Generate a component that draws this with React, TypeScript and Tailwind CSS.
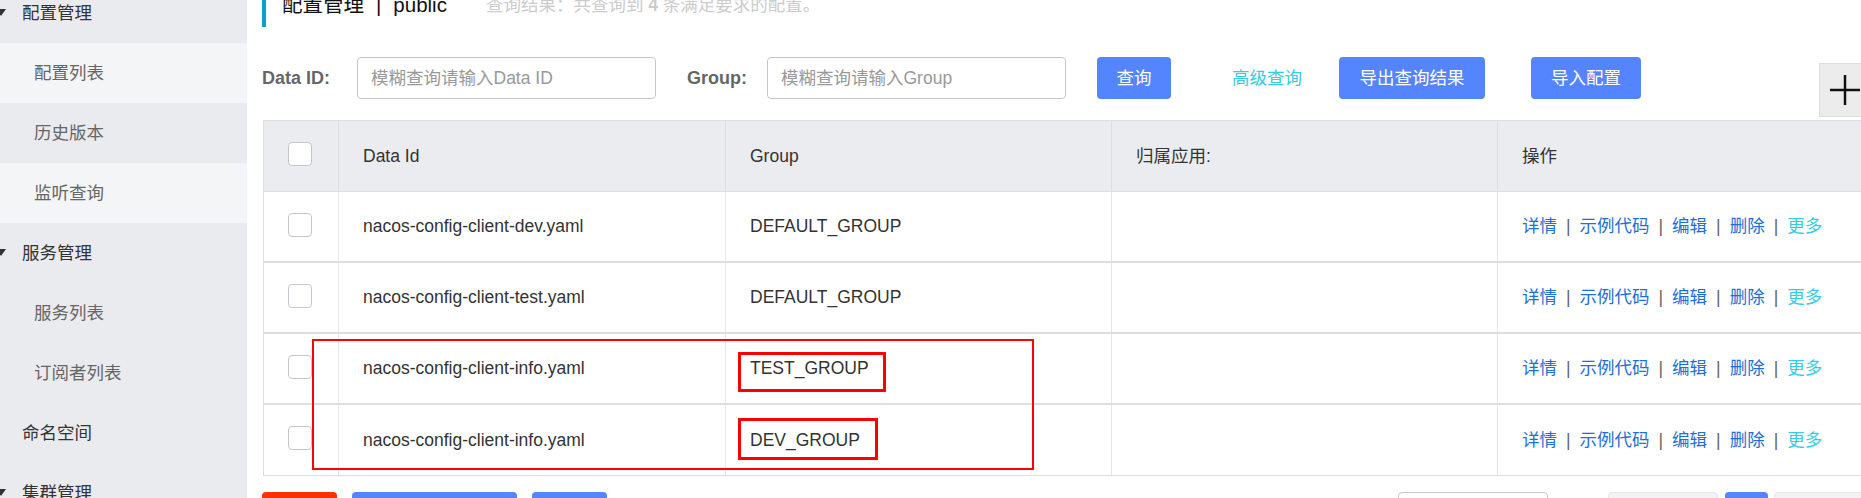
import React from "react";

const font = "font-['Liberation_Sans','Noto_Sans_CJK_SC',sans-serif]";

function Caret() {
  return (
    <svg width="10" height="8" viewBox="0 0 10 8" className="-ml-[4px] shrink-0">
      <polygon points="0,0 10,0 5,7" fill="#333" />
    </svg>
  );
}

function Checkbox() {
  return <div className="h-[24px] w-[24px] rounded-[4px] border border-[#c4c6cf] bg-white" />;
}

function Actions() {
  const sep = <span className="mx-[9px] text-[#666]">|</span>;
  return (
    <div className="flex items-center text-[#1e6fd9]">
      <span>详情</span>
      {sep}
      <span>示例代码</span>
      {sep}
      <span>编辑</span>
      {sep}
      <span>删除</span>
      {sep}
      <span className="text-[#33cde5]">更多</span>
    </div>
  );
}

export default function App() {
  const rows = [
    { id: "nacos-config-client-dev.yaml", group: "DEFAULT_GROUP" },
    { id: "nacos-config-client-test.yaml", group: "DEFAULT_GROUP" },
    { id: "nacos-config-client-info.yaml", group: "TEST_GROUP" },
    { id: "nacos-config-client-info.yaml", group: "DEV_GROUP" },
  ];

  return (
    <div className={`flex h-[498px] w-[1861px] overflow-hidden bg-white text-[17.5px] text-[#333] ${font}`}>
      {/* sidebar */}
      <aside className="w-[247px] shrink-0 bg-[#eaebef]">
        <div className="-mt-[17px]">
          <div className="flex h-[60px] items-center">
            <Caret />
            <span className="ml-[16px] text-[#333]">配置管理</span>
          </div>
          <div className="flex h-[60px] items-center bg-[#f4f5f7] pl-[34px] text-[#666]">配置列表</div>
          <div className="flex h-[60px] items-center pl-[34px] text-[#666]">历史版本</div>
          <div className="flex h-[60px] items-center bg-[#f4f5f7] pl-[34px] text-[#666]">监听查询</div>
          <div className="flex h-[60px] items-center">
            <Caret />
            <span className="ml-[16px] text-[#333]">服务管理</span>
          </div>
          <div className="flex h-[60px] items-center pl-[34px] text-[#666]">服务列表</div>
          <div className="flex h-[60px] items-center pl-[34px] text-[#666]">订阅者列表</div>
          <div className="flex h-[60px] items-center pl-[22px] text-[#333]">命名空间</div>
          <div className="flex h-[60px] items-center">
            <Caret />
            <span className="ml-[16px] text-[#333]">集群管理</span>
          </div>
        </div>
      </aside>

      {/* main */}
      <main className="relative flex-1 pl-[15px]">
        <div className="-mt-[16px] flex h-[43px] items-center border-l-4 border-[#0a9fd0] pl-[16px]">
          <span className="text-[20.5px] text-[#111]">配置管理</span>
          <span className="mx-[12px] text-[20.5px] text-[#111]">|</span>
          <span className="text-[20.5px] text-[#111]">public</span>
          <span className="ml-[39px] text-[#ccc]">
            查询结果：共查询到 <b>4</b> 条满足要求的配置。
          </span>
        </div>

        <div className="mt-[30px] flex h-[42px] items-center">
          <span className="w-[76px] text-[18px] font-bold text-[#666]">Data ID:</span>
          <div className="ml-[19px] flex h-[42px] w-[299px] items-center rounded-[4px] border border-[#c4c6cf] pl-[13px] text-[#999]">
            模糊查询请输入Data ID
          </div>
          <span className="ml-[31px] text-[18px] font-bold text-[#666]">Group:</span>
          <div className="ml-[20px] flex h-[42px] w-[299px] items-center rounded-[4px] border border-[#c4c6cf] pl-[13px] text-[#999]">
            模糊查询请输入Group
          </div>
          <button className="ml-[31px] h-[42px] w-[74px] rounded-[4px] bg-[#5584ff] text-white">查询</button>
          <span className="ml-[61px] text-[#33cde5]">高级查询</span>
          <button className="ml-[37px] h-[42px] w-[146px] rounded-[4px] bg-[#5584ff] text-white">导出查询结果</button>
          <button className="ml-[46px] h-[42px] w-[110px] rounded-[4px] bg-[#5584ff] text-white">导入配置</button>
        </div>

        <div className="absolute left-[1572px] top-[63px] flex h-[54px] w-[54px] items-center border border-[#dcdcdc] bg-[#ececec] pl-[10px]">
          <svg width="30" height="30" viewBox="0 0 30 30">
            <line x1="0" y1="15" x2="30" y2="15" stroke="#111" strokeWidth="2.5" />
            <line x1="15" y1="0" x2="15" y2="30" stroke="#111" strokeWidth="2.5" />
          </svg>
        </div>

        {/* table */}
        <div className="relative ml-[1px] mt-[21px] w-[1621px] border-l border-t border-[#dcdee3]">
          <div className="grid h-[71px] grid-cols-[75px_387px_386px_386px_387px] border-b border-[#dcdee3] bg-[#ebecf0]">
            <div className="flex items-center border-r border-[#dcdee3] pb-[4px] pl-[24px]">
              <Checkbox />
            </div>
            <div className="flex items-center border-r border-[#dcdee3] pl-[24px]">Data Id</div>
            <div className="flex items-center border-r border-[#dcdee3] pl-[24px]">Group</div>
            <div className="flex items-center border-r border-[#dcdee3] pl-[24px]">归属应用:</div>
            <div className="flex items-center pl-[24px]">操作</div>
          </div>
          {rows.map((r, i) => (
            <div
              key={i}
              className={`grid h-[71px] grid-cols-[75px_387px_386px_386px_387px] border-[#dcdee3] ${
                i < rows.length - 1 ? "border-b-2" : "border-b"
              }`}
            >
              <div className="flex items-center border-r border-[#e4e5ea] pb-[4px] pl-[24px]">
                <Checkbox />
              </div>
              <div className="flex items-center border-r border-[#e4e5ea] pl-[24px]">{r.id}</div>
              <div className="flex items-center border-r border-[#e4e5ea] pl-[24px]">{r.group}</div>
              <div className="flex items-center border-r border-[#e4e5ea] pl-[24px]" />
              <div className="flex items-center pl-[24px]">
                <Actions />
              </div>
            </div>
          ))}

          {/* annotation boxes */}
          <div className="absolute left-[48px] top-[218px] h-[131px] w-[722px] border-2 border-[#ff0000]" />
          <div className="absolute left-[474px] top-[231px] h-[40px] w-[148px] border-[3px] border-[#ff0000]" />
          <div className="absolute left-[474px] top-[297px] h-[42px] w-[140px] border-[3px] border-[#ff0000]" />
        </div>

        <div className="mt-[16px] flex">
          <div className="h-[42px] w-[75px] rounded-[4px] bg-[#ff3000]" />
          <div className="ml-[15px] h-[42px] w-[165px] rounded-[4px] bg-[#5584ff]" />
          <div className="ml-[15px] h-[42px] w-[75px] rounded-[4px] bg-[#5584ff]" />
          <div className="ml-[791px] h-[42px] w-[150px] rounded-[4px] border border-[#c4c6cf] bg-white" />
          <div className="ml-[60px] h-[42px] w-[110px] rounded-[4px] border border-[#e6e7eb] bg-[#f2f3f7]" />
          <div className="ml-[7px] h-[42px] w-[43px] rounded-[4px] bg-[#5584ff]" />
          <div className="ml-[6px] h-[42px] w-[110px] rounded-[4px] border border-[#e6e7eb] bg-[#f2f3f7]" />
        </div>
      </main>
    </div>
  );
}
